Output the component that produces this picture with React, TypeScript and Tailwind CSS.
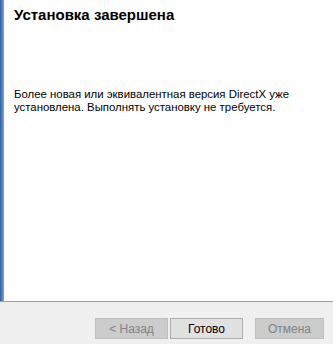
export default function App() {
  return (
    <div className="w-[333px] h-[344px] flex flex-col bg-[#f0f0f0]" style={{ fontFamily: '"Liberation Sans", Arial, sans-serif' }}>
      <div className="h-[301px] flex bg-white">
        <div className="w-[4px] h-full bg-gradient-to-r from-[#2a5ea8] to-[#7aa6dc]" />
        <div className="flex-1 pl-[10px] pt-[4px]">
          <div className="text-[15px] font-bold text-black leading-[22px]">Установка завершена</div>
          <div className="mt-[62px] text-[11.4px] leading-[13px] text-black">
            Более новая или эквивалентная версия DirectX уже<br />установлена. Выполнять установку не требуется.
          </div>
        </div>
      </div>
      <div className="h-px bg-[#a0a0a0]" />
      <div className="flex-1 flex items-start pt-[16px] pl-[95px]">
        <div className="w-[73px] h-[21px] flex items-center justify-center border border-[#bfbfbf] bg-[#cccccc] text-[12px] text-[#838383]">&lt; Назад</div>
        <div className="ml-[2px] w-[73px] h-[21px] flex items-center justify-center border border-[#adadad] bg-[#e1e1e1] text-[12px] text-black">Готово</div>
        <div className="ml-[12px] w-[69px] h-[21px] flex items-center justify-center border border-[#bfbfbf] bg-[#cccccc] text-[12px] text-[#838383]">Отмена</div>
      </div>
    </div>
  );
}
